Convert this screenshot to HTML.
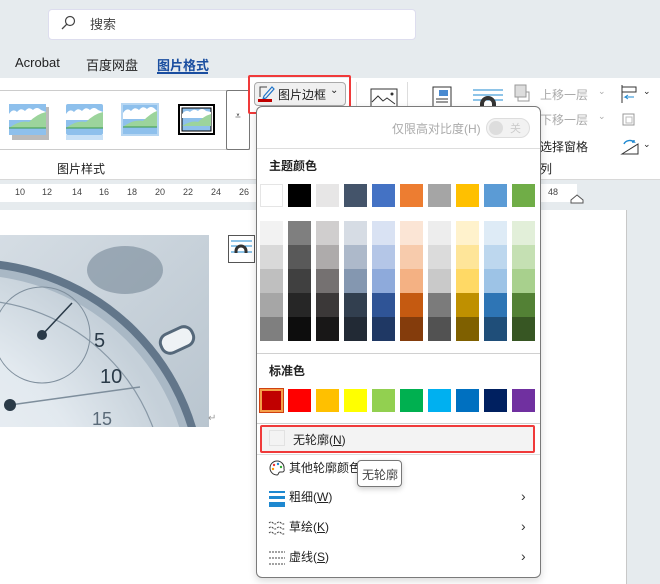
<!DOCTYPE html>
<html><head><meta charset="utf-8"><style>
*{margin:0;padding:0;box-sizing:border-box}
body{width:660px;height:584px;overflow:hidden;background:#e6ebee;font-family:"Liberation Sans","Noto Sans CJK SC",sans-serif;font-size:12px;color:#222;position:relative}
.a{position:absolute}
.sw{position:absolute;width:23px;height:23px}
.menu-t{position:absolute;font-size:12px;color:#222}
</style></head><body>
<!-- search -->
<div class="a" style="left:48px;top:9px;width:368px;height:31px;background:#fff;border:1px solid #dde;border-radius:4px"></div>
<svg class="a" style="left:60px;top:15px" width="16" height="16"><circle cx="10" cy="6" r="4.5" fill="none" stroke="#444" stroke-width="1.2"/><line x1="6.8" y1="9.2" x2="2" y2="14" stroke="#444" stroke-width="1.3"/></svg>
<div class="a" style="left:90px;top:14px;font-size:13px;color:#444">搜索</div>
<!-- tabs -->
<div class="a" style="left:15px;top:55px;font-size:13px">Acrobat</div>
<div class="a" style="left:86px;top:55px;font-size:13px">百度网盘</div>
<div class="a" style="left:157px;top:55px;font-size:13px;color:#1a4ea0;font-weight:bold">图片格式</div>
<div class="a" style="left:157px;top:72px;width:51px;height:2px;background:#1a4ea0"></div>
<!-- ribbon -->
<div class="a" style="left:0;top:78px;width:660px;height:102px;background:#fff;border-bottom:1px solid #d8d8d8"></div>
<div class="a" style="left:0;top:90px;width:250px;height:60px;border-top:1px solid #ccc;border-bottom:1px solid #ccc"></div>
<div class="a" style="left:226px;top:90px;width:24px;height:60px;border:1px solid #777;border-radius:2px;background:#fff;text-align:center;padding-top:20px;font-size:10px">⩡</div>
<!-- gallery pics -->
<svg class="a" style="left:9px;top:104px" width="40" height="36"><rect x="3" y="3" width="37" height="33" fill="#bbb"/><rect x="0" y="0" width="37" height="31" fill="#8ec0ec"/><path d="M0 10 q4-6 8-2 q4-5 8-1 q4-5 8-1 q4-4 8 0 l5 2 v8 H0z" fill="#fff"/><path d="M0 24 q10-8 20-6 q8-8 17-10 V24z" fill="#9cd49c"/><line x1="0" y1="24" x2="37" y2="24" stroke="#3a9a4a"/></svg>
<svg class="a" style="left:66px;top:104px" width="38" height="36"><rect x="0" y="0" width="37" height="31" fill="#8ec0ec" rx="2"/><rect x="0" y="31" width="37" height="5" fill="#c7e0f6"/><path d="M0 10 q4-6 8-2 q4-5 8-1 q4-5 8-1 q4-4 8 0 l5 2 v8 H0z" fill="#fff"/><path d="M0 24 q10-8 20-6 q8-8 17-10 V24z" fill="#9cd49c"/><line x1="0" y1="24" x2="37" y2="24" stroke="#3a9a4a"/></svg>
<svg class="a" style="left:121px;top:103px" width="40" height="34"><rect x="0" y="0" width="38" height="33" fill="#b6d6f2"/><rect x="2" y="2" width="34" height="29" fill="#8ec0ec"/><path d="M2 10 q4-6 8-2 q4-5 8-1 q4-5 8-1 q4-4 8 0 l2 2 v8 H2z" fill="#fff"/><path d="M2 24 q10-8 20-6 q8-8 14-10 V24z" fill="#9cd49c"/><line x1="2" y1="24" x2="36" y2="24" stroke="#3a9a4a"/></svg>
<svg class="a" style="left:178px;top:104px" width="38" height="32"><rect x="1" y="1" width="35" height="29" fill="#fff" stroke="#000" stroke-width="2"/><rect x="4" y="4" width="29" height="23" fill="#8ec0ec" stroke="#000"/><path d="M4 10 q4-5 8-2 q4-4 8-1 q4-4 8 0 l5 1 v6 H4z" fill="#fff"/><path d="M4 22 q10-6 16-4 q6-6 13-8 V22z" fill="#9cd49c"/></svg>
<div class="a" style="left:57px;top:160px;font-size:12px">图片样式</div>
<!-- picture border button -->
<div class="a" style="left:254px;top:82px;width:92px;height:24px;background:#f0f0f0;border:1px solid #aaa;border-radius:4px"></div>
<svg class="a" style="left:258px;top:85px" width="18" height="18"><path d="M2 12 V2 h7" fill="none" stroke="#444"/><path d="M6 11 l8-9 2 2-8 9-3 1z" fill="none" stroke="#1e73c8" stroke-width="1.2"/><rect x="0" y="14" width="14" height="3" fill="#c00000"/></svg>
<div class="a" style="left:278px;top:86px;font-size:12px">图片边框</div>
<div class="a" style="left:330px;top:85px;font-size:10px">⌄</div>
<div class="a" style="left:248px;top:75px;width:103px;height:39px;border:2px solid #f03a3a;border-radius:2px"></div>
<div class="a" style="left:356px;top:82px;width:1px;height:30px;background:#ddd"></div>
<div class="a" style="left:407px;top:82px;width:1px;height:30px;background:#ddd"></div>
<svg class="a" style="left:370px;top:88px" width="30" height="20"><rect x="1" y="1" width="26" height="18" fill="#fff" stroke="#333"/><path d="M2 14 l6-6 5 5 4-3 8 6" fill="none" stroke="#333"/><circle cx="22" cy="6" r="1.5" fill="#333"/></svg>
<svg class="a" style="left:431px;top:86px" width="24" height="22"><rect x="2" y="1" width="18" height="21" fill="#fff" stroke="#333"/><rect x="8" y="4" width="9" height="6" fill="#4a8ad0"/><line x1="5" y1="13" x2="17" y2="13" stroke="#333"/><line x1="5" y1="16" x2="17" y2="16" stroke="#333"/></svg>
<svg class="a" style="left:473px;top:88px" width="30" height="20"><line x1="0" y1="2" x2="30" y2="2" stroke="#1e88d0"/><line x1="0" y1="7" x2="30" y2="7" stroke="#1e88d0"/><line x1="0" y1="12" x2="30" y2="12" stroke="#1e88d0"/><path d="M9 20 v-4 a6 6 0 0 1 12 0 v4" fill="none" stroke="#333" stroke-width="4"/></svg>
<svg class="a" style="left:514px;top:84px" width="16" height="18"><rect x="1" y="1" width="11" height="12" fill="#ddd" stroke="#999"/><path d="M4 13 v4 h11 v-9 h-3" fill="none" stroke="#999"/></svg>
<div class="a" style="left:540px;top:86px;color:#aaa">上移一层</div><div class="a" style="left:598px;top:86px;color:#aaa;font-size:9px">⌄</div>
<div class="a" style="left:540px;top:111px;color:#aaa">下移一层</div><div class="a" style="left:598px;top:111px;color:#aaa;font-size:9px">⌄</div>
<div class="a" style="left:540px;top:138px;color:#222">选择窗格</div>
<div class="a" style="left:540px;top:160px;color:#222">列</div>
<svg class="a" style="left:620px;top:84px" width="20" height="20"><line x1="2" y1="1" x2="2" y2="19" stroke="#333"/><rect x="2" y="3" width="14" height="5" fill="none" stroke="#333"/><path d="M14 13 h-9 l3-2 M5 13 l3 2" fill="none" stroke="#1e88d0"/></svg>
<div class="a" style="left:643px;top:86px;font-size:9px">⌄</div>
<svg class="a" style="left:620px;top:111px" width="18" height="18"><rect x="3" y="3" width="11" height="11" fill="none" stroke="#999"/><rect x="6" y="6" width="6" height="6" fill="none" stroke="#bbb"/></svg>
<svg class="a" style="left:620px;top:136px" width="20" height="20"><path d="M2 18 L18 8 V18z" fill="none" stroke="#333"/><path d="M4 8 a6 5 0 0 1 10-2 l-2 0 m2 0 l0 -2" fill="none" stroke="#1e88d0" stroke-width="1.4"/></svg>
<div class="a" style="left:643px;top:139px;font-size:9px">⌄</div>
<!-- ruler -->
<div class="a" style="left:0;top:184px;width:577px;height:18px;background:#fff"></div>
<div class="a" style="left:0;top:187px;width:260px;font-size:9px;color:#444;white-space:nowrap">
<span class="a" style="left:15px">10</span><span class="a" style="left:42px">12</span><span class="a" style="left:72px">14</span><span class="a" style="left:99px">16</span><span class="a" style="left:127px">18</span><span class="a" style="left:155px">20</span><span class="a" style="left:183px">22</span><span class="a" style="left:211px">24</span><span class="a" style="left:239px">26</span></div>
<div class="a" style="left:548px;top:187px;font-size:9px;color:#444">48</div>
<svg class="a" style="left:570px;top:193px" width="16" height="12"><path d="M1 10 v-3 l6-5 6 5 v3z" fill="#fff" stroke="#555"/></svg>
<!-- doc -->
<div class="a" style="left:0;top:210px;width:627px;height:374px;background:#fff;border-right:1px solid #c8c8c8"></div>
<svg class="a" style="left:0;top:235px" width="209" height="192">
<defs><radialGradient id="g" cx="0.3" cy="0.6" r="0.7"><stop offset="0" stop-color="#f4f7fa"/><stop offset="0.7" stop-color="#e2e9ef"/><stop offset="1" stop-color="#c5d0d9"/></radialGradient>
<linearGradient id="bg" x1="0" y1="0" x2="1" y2="1"><stop offset="0" stop-color="#d5dde4"/><stop offset="1" stop-color="#b9c5cf"/></linearGradient></defs>
<rect width="209" height="192" fill="url(#bg)"/>
<ellipse cx="125" cy="35" rx="38" ry="24" fill="#6f8291" opacity="0.55"/>
<rect x="160" y="95" width="34" height="20" rx="9" fill="#eef2f5" stroke="#55687a" stroke-width="3" transform="rotate(-25 177 105)"/>
<circle cx="-30" cy="260" r="236" fill="#62768a"/>
<circle cx="-30" cy="260" r="228" fill="#a9b8c5"/>
<circle cx="-30" cy="260" r="220" fill="url(#g)"/>
<circle cx="-30" cy="260" r="195" fill="none" stroke="#8898a6" stroke-width="1.2"/>
<circle cx="42" cy="100" r="48" fill="none" stroke="#7e8e9c"/>
<circle cx="42" cy="100" r="5" fill="#2a3a48"/>
<line x1="42" y1="100" x2="72" y2="68" stroke="#2a3a48" stroke-width="1.5"/>
<line x1="10" y1="170" x2="140" y2="152" stroke="#7e8e9c" stroke-width="1.5"/>
<circle cx="10" cy="170" r="6" fill="#2a3a48"/>
<text x="94" y="112" font-size="20" fill="#2a3a48" font-family="Liberation Sans">5</text>
<text x="100" y="148" font-size="20" fill="#2a3a48" font-family="Liberation Sans">10</text>
<text x="92" y="190" font-size="18" fill="#5a6a78" font-family="Liberation Sans">15</text>
</svg>
<div class="a" style="left:208px;top:413px;color:#999;font-size:10px">↵</div>
<svg class="a" style="left:228px;top:235px" width="27" height="28"><rect x="0.5" y="0.5" width="26" height="27" fill="#fff" stroke="#555"/><line x1="3" y1="6" x2="24" y2="6" stroke="#1e88d0"/><line x1="3" y1="11" x2="24" y2="11" stroke="#1e88d0"/><line x1="3" y1="17" x2="24" y2="17" stroke="#1e88d0"/><path d="M8 18 v-2 a5 5 0 0 1 10 0 v2" fill="none" stroke="#333" stroke-width="3"/></svg>
<!-- menu -->
<div class="a" style="left:256px;top:106px;width:285px;height:472px;background:#fff;border:1px solid #7a7a7a;border-radius:6px;box-shadow:0 3px 8px rgba(0,0,0,0.15)"></div>
<div class="a" style="left:392px;top:120px;color:#aaa;font-size:12px">仅限高对比度(H)</div>
<div class="a" style="left:486px;top:118px;width:44px;height:20px;border:1px solid #ddd;border-radius:10px;background:#f2f2f2"></div>
<div class="a" style="left:489px;top:121px;width:14px;height:14px;border-radius:7px;background:#ddd"></div>
<div class="a" style="left:510px;top:120px;color:#ccc;font-size:11px">关</div>
<div class="a" style="left:257px;top:148px;width:283px;height:1px;background:#ddd"></div>
<div class="menu-t" style="left:269px;top:157px;font-weight:bold">主题颜色</div>
<div class="a" style="left:257px;top:353px;width:283px;height:1px;background:#d0d0d0"></div>
<div class="menu-t" style="left:269px;top:362px;font-weight:bold">标准色</div>
<div class="a" style="left:257px;top:423px;width:283px;height:1px;background:#d0d0d0"></div>
<div class="a" style="left:260px;top:425px;width:275px;height:28px;background:#f3f3f3;border:2px solid #f03a3a;border-radius:2px"></div>
<div class="a" style="left:269px;top:430px;width:16px;height:16px;border:1px solid #e2e2e2"></div>
<div class="menu-t" style="left:293px;top:431px">无轮廓(<u>N</u>)</div>
<div class="a" style="left:257px;top:454px;width:283px;height:1px;background:#ddd"></div>
<svg class="a" style="left:268px;top:459px" width="18" height="18"><path d="M9 2 a7 7 0 1 0 0 14 c2 0 1-3 3-3 h2 a2 2 0 0 0 2-3 A7 7 0 0 0 9 2z" fill="none" stroke="#333"/><circle cx="6" cy="6" r="1.2" fill="#e33"/><circle cx="10" cy="5" r="1.2" fill="#1e88d0"/><circle cx="13" cy="8" r="1.2" fill="#3a3"/><circle cx="5" cy="10" r="1.2" fill="#f90"/></svg>
<div class="menu-t" style="left:289px;top:459px">其他轮廓颜色</div>
<div class="a" style="left:357px;top:460px;width:45px;height:27px;background:#fff;border:1px solid #777;border-radius:4px;box-shadow:0 2px 6px rgba(0,0,0,0.2);font-size:12px;color:#444;padding:5px 0 0 4px">无轮廓</div>
<svg class="a" style="left:268px;top:490px" width="18" height="18"><rect x="1" y="1" width="16" height="2" fill="#1e88d0"/><rect x="1" y="6" width="16" height="3" fill="#1e88d0"/><rect x="1" y="12" width="16" height="5" fill="#1e88d0"/></svg>
<div class="menu-t" style="left:289px;top:488px">粗细(<u>W</u>)</div>
<svg class="a" style="left:268px;top:520px" width="18" height="16"><path d="M1 3 q2-2 4 0 t4 0 t4 0 t4 0 M1 8 q2-2 4 0 t4 0 t4 0 t4 0 M1 13 q2-2 4 0 t4 0 t4 0 t4 0" fill="none" stroke="#444" stroke-dasharray="2 1"/></svg>
<div class="menu-t" style="left:289px;top:518px">草绘(<u>K</u>)</div>
<svg class="a" style="left:268px;top:550px" width="18" height="16"><path d="M1 2 h16 M1 8 h16 M1 14 h16" fill="none" stroke="#444" stroke-dasharray="2 1"/></svg>
<div class="menu-t" style="left:289px;top:548px">虚线(<u>S</u>)</div>
<div class="a" style="left:521px;top:488px;font-size:14px;color:#333">›</div>
<div class="a" style="left:521px;top:518px;font-size:14px;color:#333">›</div>
<div class="a" style="left:521px;top:548px;font-size:14px;color:#333">›</div>
<!-- swatches -->
<div class="sw" style="left:260px;top:184px;background:#fff;border:1px solid #e5e5e5"></div>
<div class="sw" style="left:288px;top:184px;background:#000"></div>
<div class="sw" style="left:316px;top:184px;background:#e7e6e6"></div>
<div class="sw" style="left:344px;top:184px;background:#44546a"></div>
<div class="sw" style="left:372px;top:184px;background:#4472c4"></div>
<div class="sw" style="left:400px;top:184px;background:#ed7d31"></div>
<div class="sw" style="left:428px;top:184px;background:#a5a5a5"></div>
<div class="sw" style="left:456px;top:184px;background:#ffc000"></div>
<div class="sw" style="left:484px;top:184px;background:#5b9bd5"></div>
<div class="sw" style="left:512px;top:184px;background:#70ad47"></div>
<div class="a" style="left:260px;top:221px;width:23px;height:120px;background:linear-gradient(#f2f2f2 0 20%,#d9d9d9 20% 40%,#bfbfbf 40% 60%,#a6a6a6 60% 80%,#7f7f7f 80%)"></div>
<div class="a" style="left:288px;top:221px;width:23px;height:120px;background:linear-gradient(#7f7f7f 0 20%,#595959 20% 40%,#404040 40% 60%,#262626 60% 80%,#0d0d0d 80%)"></div>
<div class="a" style="left:316px;top:221px;width:23px;height:120px;background:linear-gradient(#d0cece 0 20%,#aeabab 20% 40%,#757171 40% 60%,#3b3838 60% 80%,#181717 80%)"></div>
<div class="a" style="left:344px;top:221px;width:23px;height:120px;background:linear-gradient(#d6dce4 0 20%,#adb9ca 20% 40%,#8497b0 40% 60%,#323f4f 60% 80%,#222a35 80%)"></div>
<div class="a" style="left:372px;top:221px;width:23px;height:120px;background:linear-gradient(#d9e2f3 0 20%,#b4c6e7 20% 40%,#8eaadb 40% 60%,#2f5496 60% 80%,#1f3864 80%)"></div>
<div class="a" style="left:400px;top:221px;width:23px;height:120px;background:linear-gradient(#fbe5d5 0 20%,#f7cbac 20% 40%,#f4b183 40% 60%,#c55a11 60% 80%,#843c0c 80%)"></div>
<div class="a" style="left:428px;top:221px;width:23px;height:120px;background:linear-gradient(#ededed 0 20%,#dbdbdb 20% 40%,#c9c9c9 40% 60%,#7b7b7b 60% 80%,#525252 80%)"></div>
<div class="a" style="left:456px;top:221px;width:23px;height:120px;background:linear-gradient(#fff2cc 0 20%,#fee599 20% 40%,#ffd965 40% 60%,#bf9000 60% 80%,#7f6000 80%)"></div>
<div class="a" style="left:484px;top:221px;width:23px;height:120px;background:linear-gradient(#deebf6 0 20%,#bdd7ee 20% 40%,#9dc3e6 40% 60%,#2e75b5 60% 80%,#1f4e79 80%)"></div>
<div class="a" style="left:512px;top:221px;width:23px;height:120px;background:linear-gradient(#e2efd9 0 20%,#c5e0b3 20% 40%,#a8d08d 40% 60%,#538135 60% 80%,#375623 80%)"></div>
<div class="sw" style="left:260px;top:389px;background:#c00000;border:2px solid #f4a04a;box-shadow:0 0 0 1px #d04010"></div>
<div class="sw" style="left:288px;top:389px;background:#ff0000"></div>
<div class="sw" style="left:316px;top:389px;background:#ffc000"></div>
<div class="sw" style="left:344px;top:389px;background:#ffff00"></div>
<div class="sw" style="left:372px;top:389px;background:#92d050"></div>
<div class="sw" style="left:400px;top:389px;background:#00b050"></div>
<div class="sw" style="left:428px;top:389px;background:#00b0f0"></div>
<div class="sw" style="left:456px;top:389px;background:#0070c0"></div>
<div class="sw" style="left:484px;top:389px;background:#002060"></div>
<div class="sw" style="left:512px;top:389px;background:#7030a0"></div>
</body></html>
